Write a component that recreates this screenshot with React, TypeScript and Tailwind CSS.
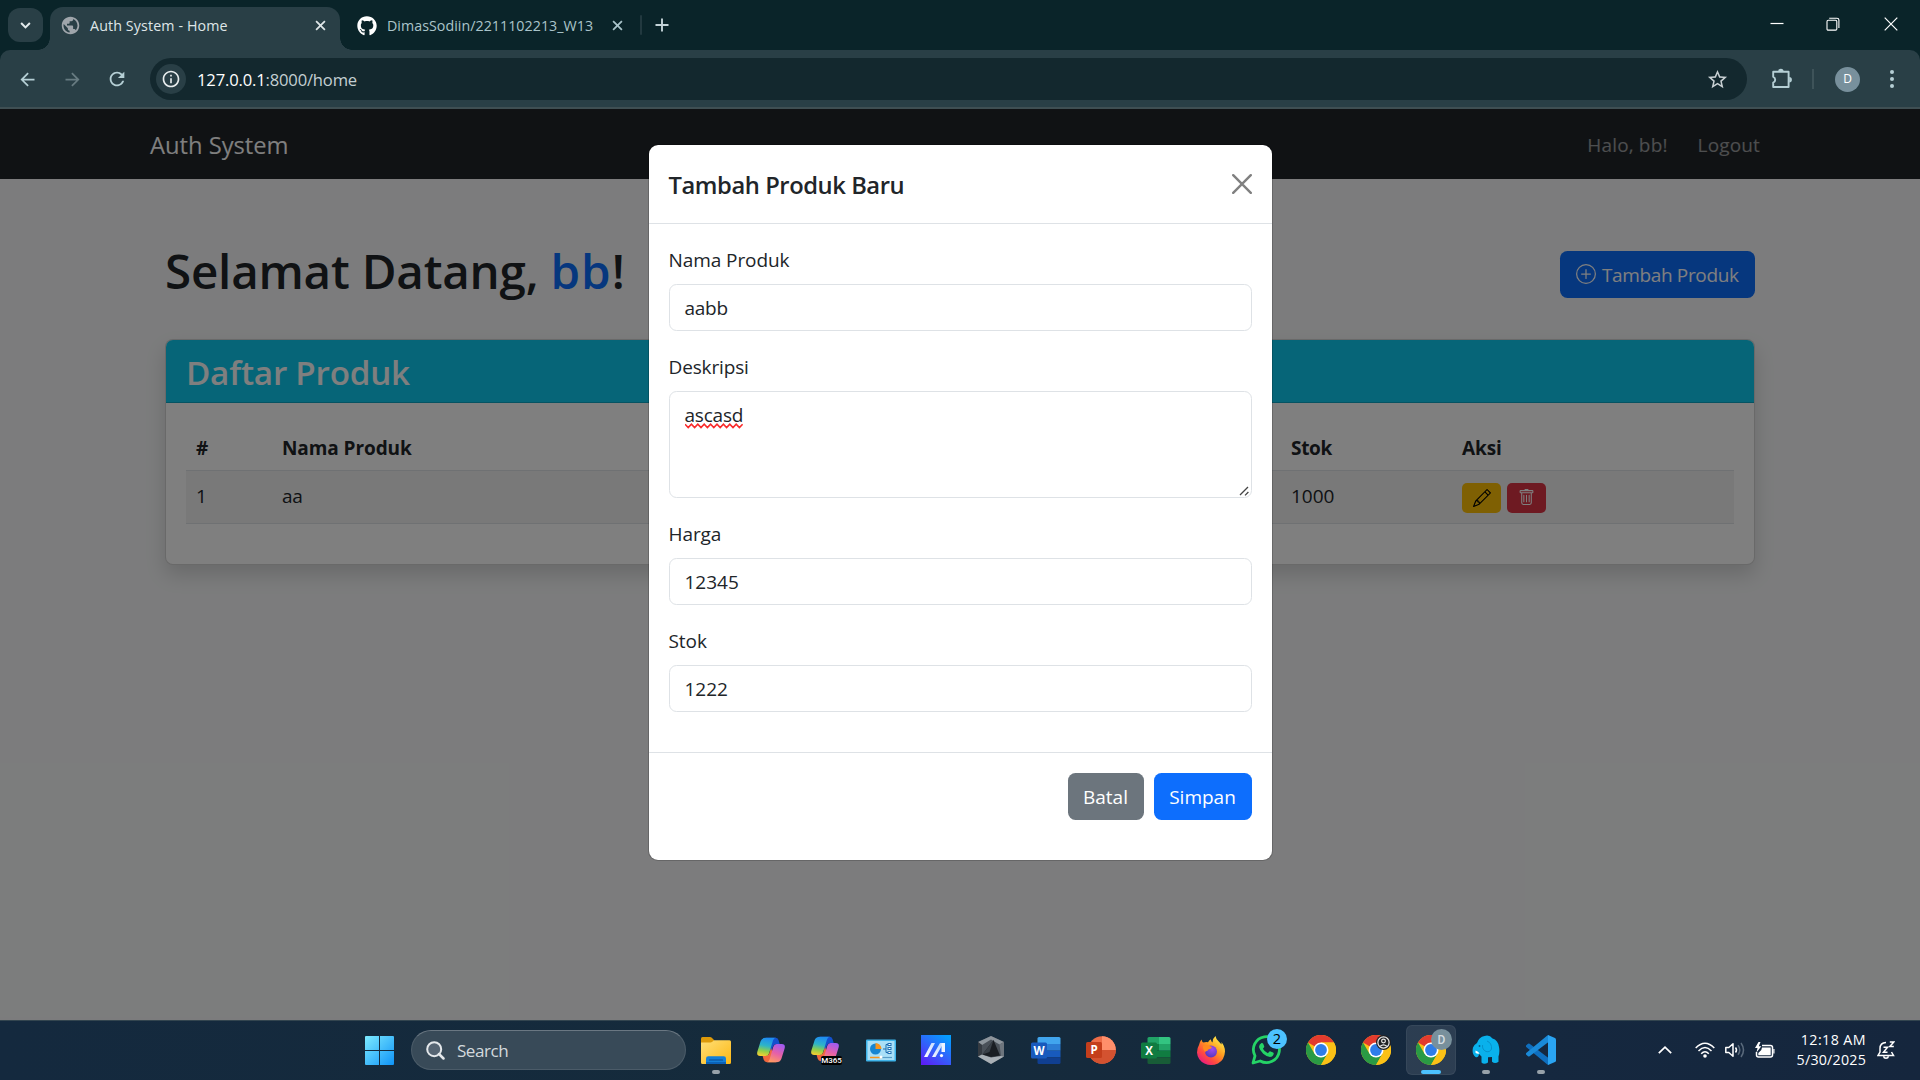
import type { ReactNode } from "react";
import { BsPencil, BsPlusCircle, BsTrash } from "react-icons/bs";
import { MdArrowBack, MdArrowForward, MdInfoOutline, MdPublic, MdRefresh, MdStarBorder } from "react-icons/md";
import { FaGithub } from "react-icons/fa";

function CloseGlyph({ className }: { className: string }) {
  return (
    <svg viewBox="0 0 12 12" className={className} stroke="currentColor" strokeWidth="1.9" fill="none">
      <path d="M1.2 1.2 10.8 10.8M10.8 1.2 1.2 10.8" />
    </svg>
  );
}

function TabStrip() {
  return (
    <div className="flex h-[50px] items-start bg-[#0a2429] text-[14.25px]">
      <div className="ml-2 mt-2 flex h-[34px] w-[35px] items-center justify-center rounded-[12px] bg-[#293f46]">
        <svg viewBox="0 0 12 8" className="h-[7px] w-[11px]" fill="none" stroke="#e3ebed" strokeWidth="2.3">
          <path d="M1 1.2 6 6.2 11 1.2" />
        </svg>
      </div>
      <div className="-ml-[5px] mt-[38px] h-3 w-3 bg-[radial-gradient(circle_at_0px_0px,transparent_11.5px,#293f46_12px)]" />
      <div className="mt-[7px] flex h-[43px] w-[290px] items-center rounded-t-[13px] bg-[#293f46] pl-[10px] pr-[14px] pb-[6px] text-[#dfe6e8]">
        <MdPublic className="size-[21px] text-[#9fa5ab]" />
        <span className="ml-[9px] flex-1 whitespace-nowrap leading-[22px] tracking-[0.12px]">Auth System - Home</span>
        <CloseGlyph className="size-[11px]" />
      </div>
      <div className="mt-[38px] h-3 w-3 bg-[radial-gradient(circle_at_12px_0px,transparent_11.5px,#293f46_12px)]" />
      <div className="mt-[7px] flex h-[37px] w-[278px] items-center pl-[5px] text-[#aac4ca]">
        <FaGithub className="size-[20px] text-white" />
        <span className="ml-[10px] whitespace-nowrap leading-[22px] tracking-[0.03px]">DimasSodiin/2211102213_W13</span>
        <CloseGlyph className="ml-[19px] size-[11px]" />
      </div>
      <div className="ml-[10px] mt-[15px] h-5 w-[2px] rounded bg-[#22393f]" />
      <svg viewBox="0 0 14 14" className="ml-[13px] mt-[18px] size-[14px]" stroke="#c3d3d7" strokeWidth="1.9">
        <path d="M7 0.5V13.5M0.5 7H13.5" />
      </svg>
      <div className="flex flex-1 justify-end">
        <svg viewBox="0 0 14 14" className="mt-[17px] size-[14px]" stroke="#fff" strokeWidth="1.2">
          <path d="M0.5 6.5H13.5" />
        </svg>
        <svg viewBox="0 0 14 14" className="ml-[42px] mt-[17px] size-[14px]" stroke="#fff" strokeWidth="1.1" fill="none">
          <rect x="1" y="3.3" width="9.8" height="9.8" rx="1.2" />
          <path d="M3.2 1.2H11q1.9 0 1.9 1.9V11" />
        </svg>
        <svg viewBox="0 0 14 14" className="ml-[44px] mr-[22px] mt-[17px] size-[14px]" stroke="#fff" strokeWidth="1.2">
          <path d="M0.7 0.7 13.3 13.3M13.3 0.7 0.7 13.3" />
        </svg>
      </div>
    </div>
  );
}

function AddressBar() {
  return (
    <div className="bg-[#0a2429]">
      <div className="flex h-[59px] items-start rounded-t-[10px] border-b-2 border-[#3f4f53] bg-[#293f46] pt-2">
        <div className="flex h-[42px] w-[150px] items-center pl-[17px]">
          <MdArrowBack className="size-[21px] text-[#b5cfd5]" />
          <MdArrowForward className="ml-[24px] size-[21px] text-[#677b81]" />
          <MdRefresh className="ml-[23px] size-[22px] text-[#b5cfd5]" />
        </div>
        <div className="flex h-[42px] w-[1597px] items-center rounded-full bg-[#13282e] pl-[6px] pr-[18px]">
          <div className="flex size-[30px] items-center justify-center rounded-full bg-[#293f46]">
            <MdInfoOutline className="size-[20px] text-[#e8edee]" />
          </div>
          <span className="ml-[11px] flex-1 pt-[2px] text-[16.6px] leading-[24px] tracking-[-0.17px] text-[#c3cfd2]">
            <span className="text-white">127.0.0.1</span>:8000/home
          </span>
          <MdStarBorder className="size-[23px] text-[#c8d0d3]" />
        </div>
        <div className="flex h-[42px] flex-1 items-center">
          <svg viewBox="0 0 22 22" className="ml-[24px] size-[22px]">
            <path
              d="M2.2 3.8h15.4v15.2H2.2v-4.4a3.1 3.1 0 0 0 0-5.8z"
              fill="none"
              stroke="#b5cfd5"
              strokeWidth="1.9"
              strokeLinejoin="round"
            />
            <path d="M7.2 3.4a2.7 2.7 0 0 1 5.4 0zM18.2 9a2.7 2.7 0 0 1 0 5.4z" fill="#b5cfd5" />
          </svg>
          <div className="ml-[19px] h-5 w-[2px] bg-[#3e5359]" />
          <div className="ml-[21px] flex size-[25px] items-center justify-center rounded-full bg-[#78909c] text-[12px] font-medium text-white">D</div>
          <div className="ml-[30px] flex w-1 flex-col gap-[3px]">
            <span className="size-1 rounded-full bg-[#b5cfd5]" />
            <span className="size-1 rounded-full bg-[#b5cfd5]" />
            <span className="size-1 rounded-full bg-[#b5cfd5]" />
          </div>
        </div>
      </div>
    </div>
  );
}

function HomePage() {
  return (
    <div className="h-[911px] bg-[#f8f9fa] text-[19px] text-[#212529]">
      <nav className="flex h-[70px] items-center bg-[#212529] pl-[150px] pr-[160px]">
        <span className="flex-1 text-[23.75px] leading-[34px] pt-[2px] tracking-[-0.03px] text-white">Auth System</span>
        <span className="pt-px leading-[30px] tracking-[0.15px] text-white/55">Halo, bb!</span>
        <span className="ml-[30px] pt-px leading-[30px] tracking-[0.15px] text-white/55">Logout</span>
      </nav>
      <main className="px-[165px] pt-[60px]">
        <div className="flex h-[70px] items-center justify-between">
          <h1 className="mb-[10px] h-[60px] text-[47.5px] font-semibold leading-[63px] tracking-[-0.2px]">
            Selamat Datang, <span className="tracking-[1px] text-[#0d6efd]">bb</span>!
          </h1>
          <button className="flex h-[47px] w-[195px] items-center rounded-[7.5px] bg-[#0d6efd] pl-4 text-white">
            <BsPlusCircle className="size-[20px]" />
            <span className="ml-[6px] whitespace-nowrap pt-[2px] tracking-[-0.36px]">Tambah Produk</span>
          </button>
        </div>
        <section className="mt-[30px] flex h-[226px] flex-col overflow-hidden rounded-[8px] border border-black/[0.175] bg-white bg-clip-border shadow-[0_10px_20px_rgba(0,0,0,0.15)]">
          <h3 className="h-[63px] shrink-0 border-b border-black/[0.175] bg-[#0dcaf0] pl-[20px] pt-[10px] text-[33.25px] font-semibold leading-[45px] tracking-[-0.25px] text-white">
            Daftar Produk
          </h3>
          <div className="px-[20px] pt-[18px]">
            <div className="grid h-[50px] grid-cols-[86px_1009px_171px_1fr] border-b border-[#dee2e6] pt-[10px] font-bold leading-[34px]">
              <span className="pl-[10px]">#</span>
              <span className="pl-[10px] tracking-[-0.08px]">Nama Produk</span>
              <span className="pl-[10px] tracking-[-0.33px]">Stok</span>
              <span className="pl-[10px] tracking-[-0.11px]">Aksi</span>
            </div>
            <div className="grid h-[53px] grid-cols-[86px_1009px_171px_1fr] border-b border-[#dee2e6] bg-[#f2f2f2] pt-[10px] leading-[30px]">
              <span className="pl-[10px]">1</span>
              <span className="pl-[10px] tracking-[-0.3px]">aa</span>
              <span className="pl-[10px]">1000</span>
              <span className="flex gap-[6px] pl-[10px] pt-[2px]">
                <button className="flex h-[30px] w-[39px] items-center justify-center rounded-[5px] bg-[#ffc107] text-black">
                  <BsPencil className="size-[18px]" />
                </button>
                <button className="flex h-[30px] w-[39px] items-center justify-center rounded-[5px] bg-[#dc3545] pb-[2px] text-white">
                  <BsTrash className="size-[17px]" />
                </button>
              </span>
            </div>
          </div>
        </section>
      </main>
    </div>
  );
}

function Field({ label, value, spacing }: { label: string; value: string; spacing: string }) {
  return (
    <div className="mb-[20px]">
      <div className="mb-[10px] h-[30px] leading-[32px] tracking-[-0.08px]">{label}</div>
      <div className={`h-[47px] rounded-[7.5px] border border-[#dee2e6] pl-[15px] leading-[47px] ${spacing}`}>{value}</div>
    </div>
  );
}

function ProductModal() {
  return (
    <div className="h-[717px] w-[625px] rounded-[10px] border border-black/[0.175] bg-white bg-clip-padding text-[19px] text-[#212529]">
      <header className="flex h-[79px] items-center justify-between border-b border-[#dee2e6] pl-[20px] pr-[20px]">
        <h5 className="pt-[2px] text-[23.75px] font-semibold leading-[36px] tracking-[-0.43px]">Tambah Produk Baru</h5>
        <svg viewBox="0 0 20 20" className="size-[20px]" stroke="#808080" strokeWidth="2.4" strokeLinecap="round">
          <path d="M1.2 1.2 18.8 18.8M18.8 1.2 1.2 18.8" />
        </svg>
      </header>
      <div className="h-[529px] border-b border-[#dee2e6] p-[20px]">
        <Field label="Nama Produk" value="aabb" spacing="tracking-[-0.25px]" />
        <div className="mb-[20px]">
          <div className="mb-[10px] h-[30px] leading-[32px] tracking-[-0.14px]">Deskripsi</div>
          <div className="relative h-[107px] rounded-[7.5px] border border-[#dee2e6] pl-[15px] pt-[7px] leading-[33px] tracking-[-0.2px]">
            ascasd
            <svg viewBox="0 0 59 6" className="absolute left-[15px] top-[31px] h-[6px] w-[59px]" fill="none" stroke="#f92b2b" strokeWidth="1.6">
              <path d="M0 1.2 3.2 4.6 6.4 1.2 9.6 4.6 12.8 1.2 16 4.6 19.2 1.2 22.4 4.6 25.6 1.2 28.8 4.6 32 1.2 35.2 4.6 38.4 1.2 41.6 4.6 44.8 1.2 48 4.6 51.2 1.2 54.4 4.6 57.6 1.2" />
            </svg>
            <svg viewBox="0 0 10 10" className="absolute bottom-[1px] right-[2px] size-[10px]" stroke="#444" strokeWidth="1.3">
              <path d="M1 9 9 1M6 9.4 9.4 6" />
            </svg>
          </div>
        </div>
        <Field label="Harga" value="12345" spacing="tracking-normal" />
        <Field label="Stok" value="1222" spacing="tracking-normal" />
      </div>
      <footer className="flex justify-end gap-[10px] pr-[20px] pt-[20px] text-white">
        <button className="h-[47px] w-[76px] rounded-[7.5px] bg-[#6c757d] pt-[2px] font-medium">Batal</button>
        <button className="h-[47px] w-[98px] rounded-[7.5px] bg-[#0d6efd] pt-[2px] font-medium">Simpan</button>
      </footer>
    </div>
  );
}

/* Taskbar icons */

function Explorer() {
  return (
    <svg viewBox="0 0 30 27" className="h-[27px] w-[30px]">
      <defs>
        <linearGradient id="fold" x1="0" y1="0" x2="1" y2="1">
          <stop offset="0" stopColor="#ffdf78" />
          <stop offset="1" stopColor="#fdb813" />
        </linearGradient>
      </defs>
      <path d="M0 1.5Q0 0 1.5 0H9q1 0 1.8.8L13 3v5H0z" fill="#dd9a0a" />
      <path d="M0 5.5H9.5q1 0 1.8-.8L13 3.3h15.5q1.5 0 1.5 1.5v20.7q0 1.5-1.5 1.5H1.5Q0 27 0 25.5z" fill="url(#fold)" />
      <path d="M5 27v-5.5q0-2.3 2.3-2.3h15.4q2.3 0 2.3 2.3V27z" fill="#1480d8" />
      <path d="M5 27v-2h20v2z" fill="#0b62b8" />
      <path d="M8.5 23h13" stroke="#0a4a92" strokeWidth="1.2" strokeLinecap="round" />
    </svg>
  );
}

function Copilot({ id }: { id: string }) {
  return (
    <svg viewBox="0 0 28 26" className="h-[26px] w-[28px]">
      <defs>
        <linearGradient id={id + "a"} x1="0.4" y1="0" x2="0.2" y2="1">
          <stop offset="0" stopColor="#1f8df0" />
          <stop offset="0.4" stopColor="#2db4c8" />
          <stop offset="0.7" stopColor="#8fcf4a" />
          <stop offset="1" stopColor="#ffcf2f" />
        </linearGradient>
        <linearGradient id={id + "b"} x1="0.7" y1="0" x2="0.3" y2="1">
          <stop offset="0" stopColor="#a25bf0" />
          <stop offset="0.5" stopColor="#e660a8" />
          <stop offset="1" stopColor="#ff9a62" />
        </linearGradient>
      </defs>
      <path d="M9 .8h9.5q2.3 0 3 2.2l1.3 4.2h-3.600q-2.400 0-3.200 2.400L14 15z" fill="#1450cf" />
      <path d="M19 25.200H10q-2.600 0-3.300-2.400L5.500 18.500h4q2 0 2.700-2L14 11z" fill="#f2673e" />
      <path d="M8.800.8H19q-2.200.2-3 2.800L12 16.500q-.9 2.600-3.500 2.600H3.200Q-.8 19 .4 14.500L3.600 4.300Q4.800.8 8.800.8z" fill={`url(#${id}a)`} />
      <path d="M19.200 25.200H9.500q2.200-.2 3-2.800l3.800-12.700q.8-2.600 3.400-2.600h5.100q4 0 2.800 4.500l-3.200 10.100q-1.200 3.500-5.200 3.500z" fill={`url(#${id}b)`} />
    </svg>
  );
}

function CopilotM365() {
  return (
    <div className="relative h-[28px] w-[30px]">
      <Copilot id="m365" />
      <span className="absolute -bottom-px -right-px flex h-[9px] w-[21px] items-center justify-center rounded-[2px] bg-black font-['Roboto'] text-[8px] font-medium leading-none text-white">
        M365
      </span>
    </div>
  );
}

function ControlPanel() {
  return (
    <svg viewBox="0 0 30 22" className="h-[23px] w-[30px]">
      <rect width="30" height="22" rx="1" fill="#3fb4ea" />
      <rect x="1.5" y="1.5" width="27" height="19" fill="#a9dff7" />
      <circle cx="9.5" cy="9.5" r="5.5" fill="#1685d2" />
      <path d="M9.5 9.5V3.5a6 6 0 0 1 6 6z" fill="#f7941d" />
      <path d="M17 9.5h3V5h2M20 9.5V13h2" stroke="#1c6cae" fill="none" />
      <path d="M21.5 3.5h4v3h-4zM21.5 7.5h4v3h-4zM21.5 11.7h4v2.8h-4z" fill="#1d6fb5" />
      <path d="M22.5 4.5h2v1h-2zM22.5 8.5h2v1h-2zM22.5 12.6h2v1h-2z" fill="#fff" />
      <path d="M4 18h12" stroke="#f7941d" strokeWidth="1.5" />
      <path d="M16 18h10" stroke="#5a9ec8" strokeWidth="1.2" />
      <circle cx="15" cy="17.5" r="1.5" fill="#fff" />
    </svg>
  );
}

function MyAsus() {
  return (
    <svg viewBox="0 0 30 30" className="size-[30px]">
      <defs>
        <linearGradient id="asus" x1="0.8" y1="0" x2="0.1" y2="1">
          <stop offset="0" stopColor="#059dff" />
          <stop offset="0.6" stopColor="#3a55fa" />
          <stop offset="1" stopColor="#5d1cf5" />
        </linearGradient>
        <linearGradient id="asusw" x1="0" y1="1" x2="1" y2="0">
          <stop offset="0" stopColor="#fff" />
          <stop offset="1" stopColor="#b9d2ff" />
        </linearGradient>
      </defs>
      <rect width="30" height="30" fill="url(#asus)" />
      <path d="M3 22 10.5 8H14L6.500 22zM11 22 19 8h3.500L14.500 22z" fill="url(#asusw)" />
      <path d="M20.500 8H24v9h-3.500z" fill="#eef4ff" />
      <circle cx="20.500" cy="20.600" r="1.600" fill="#fff" />
    </svg>
  );
}

function HexShield() {
  return (
    <svg viewBox="0 0 26 28" className="h-[28px] w-[26px]">
      <path d="M13 0 26 6v14.500L13 28 0 20.500V6z" fill="#4a5159" />
      <path d="M13 0 26 6 21.500 8.500 13 3.500 4 9 0 6z" fill="#8d959c" />
      <path d="M0 6l4 3v10l-4 1.500z" fill="#353b42" />
      <path d="M26 6l-4.500 2.500L23 20l3 .5z" fill="#6d757d" />
      <path d="M13 28 0 20.500 4 18.500l9 3L23 20l3 .5z" fill="#a9b0b6" />
      <path d="M15.500 4 4.500 18.500 13 21l9-1.500z" fill="#1a1e23" />
      <path d="M15.500 4 4.500 18.500l7-2.500z" fill="#3a4148" />
    </svg>
  );
}

function Word() {
  return (
    <svg viewBox="0 0 30 27" className="h-[27px] w-[30px]">
      <path d="M8 0h20q1.500 0 1.500 1.500V7H6.500V1.500Q6.500 0 8 0z" fill="#41a5ee" />
      <path d="M6.500 7h23v6.700h-23z" fill="#2b7cd3" />
      <path d="M6.500 13.700h23v6.700h-23z" fill="#185abd" />
      <path d="M6.500 20.400h23v5.100q0 1.500-1.500 1.500H8q-1.500 0-1.500-1.500z" fill="#103f91" />
      <rect y="5.500" width="16" height="16" rx="1.500" fill="#185abd" />
      <text x="8" y="17.700" textAnchor="middle" fontSize="11.500" fontWeight="700" fill="#fff">W</text>
    </svg>
  );
}

function PowerPoint() {
  return (
    <svg viewBox="0 0 30 28" className="h-[28px] w-[30px]">
      <circle cx="16" cy="14" r="13.800" fill="#ed6c47" />
      <path d="M16 .2A13.800 13.800 0 0 1 29.800 14H16z" fill="#ff8f6b" />
      <path d="M29.800 14A13.800 13.800 0 0 1 2.200 14z" fill="#d35230" />
      <rect y="6" width="16" height="16" rx="1.500" fill="#c43e1c" />
      <text x="8" y="18.200" textAnchor="middle" fontSize="11.500" fontWeight="700" fill="#fff">P</text>
    </svg>
  );
}

function Excel() {
  return (
    <svg viewBox="0 0 30 27" className="h-[27px] w-[30px]">
      <path d="M8 0h10v7H6.500V1.500Q6.500 0 8 0z" fill="#21a366" />
      <path d="M18 0h10q1.500 0 1.500 1.500V7H18z" fill="#33c481" />
      <path d="M6.500 7H18v6.700H6.500z" fill="#107c41" />
      <path d="M18 7h11.500v6.700H18z" fill="#21a366" />
      <path d="M6.500 13.700H29.500v6.700h-23z" fill="#107c41" />
      <path d="M6.500 20.400h23v5.100q0 1.500-1.500 1.500H8q-1.500 0-1.500-1.500z" fill="#185c37" />
      <rect y="5.500" width="16" height="16" rx="1.500" fill="#107c41" />
      <text x="8" y="17.700" textAnchor="middle" fontSize="11.500" fontWeight="700" fill="#fff">X</text>
    </svg>
  );
}

function Firefox() {
  return (
    <svg viewBox="0 0 28 29" className="h-[29px] w-[28px]">
      <defs>
        <linearGradient id="ffx" x1="0.9" y1="0.1" x2="0.2" y2="1">
          <stop offset="0" stopColor="#fff04d" />
          <stop offset="0.4" stopColor="#ff9a1f" />
          <stop offset="0.7" stopColor="#ff4a40" />
          <stop offset="1" stopColor="#e5158a" />
        </linearGradient>
        <radialGradient id="ffp" cx="0.6" cy="0.3" r="0.8">
          <stop offset="0" stopColor="#a04cf0" />
          <stop offset="1" stopColor="#4a35b8" />
        </radialGradient>
      </defs>
      <path d="M2 9q.5-3 2.500-5.500Q5 6 6.500 6.500 9 5.500 11 6.200q1-2 3-3-.3 2 1.500 3.300Q15.800 2 18.500 0q.5 3.500 3.500 5.800Q24 8 24.500 8.500q.2-1.500-.2-2.500Q28 10 28 15.500 27.500 24 21 27.500 14 30.500 7.500 27.500.5 24 0 16.500 0 12 2 9z" fill="url(#ffx)" />
      <circle cx="14" cy="15.500" r="6" fill="url(#ffp)" />
      <path d="M6 10q4-2 6.500 0l2.500 1q-.5 1.800-3 2.200-1.500.3-1.500 1.800-1.500-.5-2 1Q5.500 13.500 6 10z" fill="#ff8a1e" />
    </svg>
  );
}

function WhatsApp() {
  return (
    <div className="relative size-[30px]">
      <svg viewBox="0 0 30 30" className="size-[30px]">
        <path d="M2 28 4 20.800A13 13 0 1 1 9.200 26z" fill="none" stroke="#25d366" strokeWidth="2.800" strokeLinejoin="round" />
        <path d="M10.500 8q1.200-.3 1.700.8l1 2.400q.2.700-.3 1.300l-1 1.200q1.800 3.200 5 4.600l1.500-1.700q.5-.5 1.200-.2l2.500 1.200q.7.400.6 1.100-.5 3-3.800 3.200-3 0-6.700-3.200Q8.500 15 8 12q0-2.700 2.500-4z" fill="#25d366" />
      </svg>
      <span className="absolute -right-[6px] -top-[6px] flex size-[20px] items-center justify-center rounded-full bg-[#4cc2ff] text-[14.5px] leading-none text-black">2</span>
    </div>
  );
}

function Chrome() {
  return (
    <svg viewBox="0 0 30 30" className="size-[30px]">
      <circle cx="15" cy="15" r="15" fill="#fbc116" />
      <path d="M15 15 2 7.500A15 15 0 0 1 28 7.500H15z" fill="#e33b2e" />
      <path d="M2 7.500A15 15 0 0 0 15 30l6.500-11.200L15 15 8.500 18.800z" fill="#2a9a44" />
      <path d="M28 7.500H15L21.500 18.800 15 30A15 15 0 0 0 28 7.500z" fill="#fbc116" />
      <circle cx="15" cy="15" r="7.500" fill="#fff" />
      <circle cx="15" cy="15" r="5.900" fill="#2f7de9" />
    </svg>
  );
}

function ChromeGuest() {
  return (
    <div className="relative size-[30px]">
      <Chrome />
      <svg viewBox="0 0 16 16" className="absolute right-0 top-0 size-[15px]">
        <circle cx="8" cy="8" r="8" fill="#202124" />
        <circle cx="8" cy="8" r="6" fill="none" stroke="#e8e8e8" strokeWidth="1.300" />
        <circle cx="8" cy="6.500" r="2" fill="none" stroke="#e8e8e8" strokeWidth="1.300" />
        <path d="M4.500 12q3.500-3 7 0" stroke="#e8e8e8" strokeWidth="1.300" fill="none" />
      </svg>
    </div>
  );
}

function ChromeProfile() {
  return (
    <div className="relative size-[30px]">
      <Chrome />
      <span className="absolute -right-[6px] -top-[6px] flex size-[21px] items-center justify-center rounded-full bg-[#78909c] font-['Roboto'] text-[12px] font-medium leading-none text-[#d5dde1]">
        D
      </span>
    </div>
  );
}

function Elephant() {
  return (
    <svg viewBox="0 0 28 30" className="h-[30px] w-[28px]">
      <path d="M5 8Q7 2 12.500 1q5-1.500 8 2.500Q26 5 27 12q1 5-.5 9.500v5.200q-3.500 2.600-6.500 0V22l-4 .3v5.200q-4 2.500-6.500 0v-6L7 19q-.5 4-3.500 3Q-.5 19 1 12.500 2 9.500 5 8z" fill="#09b1ec" />
      <path d="M15 6q5 2 4.500 8-1.500 3.500-5.500 2.500-4-2-3.500-6.500" stroke="#0791cb" strokeWidth="1" fill="none" />
      <path d="M3.500 15.500q3 .8 4 3-2.500.5-4-.7z" fill="#fff" />
      <circle cx="7.500" cy="11" r=".9" fill="#075f8b" />
    </svg>
  );
}

function VSCode() {
  return (
    <svg viewBox="0 0 30 30" className="size-[30px]">
      <path d="M0 10.500 2 8.700q.8-.6 1.600 0L22.500 23v7q-.8 0-1.500-.7L.2 12q-.6-.8-.2-1.500z" fill="#0f6fbf" />
      <path d="M0 19.500 2 21.300q.8.600 1.600 0L22.500 7V0q-.8 0-1.500.7L.2 18q-.6.800-.2 1.500z" fill="#1a8ad8" />
      <path d="M22 0l7 3q1 .5 1 1.600v20.800q0 1.100-1 1.600l-7 3z" fill="#2aa4f2" />
    </svg>
  );
}

function TaskItem({ children, mark = "" }: { children: ReactNode; mark?: "" | "open" | "active" }) {
  return (
    <div className="flex h-full w-[55px] items-center justify-center">
      <div
        className={
          mark === "active"
            ? "relative flex size-[50px] items-center justify-center rounded-[6px] border border-white/5 bg-white/10"
            : "relative flex size-[50px] items-center justify-center"
        }
      >
        {children}
        {mark === "open" && <span className="absolute bottom-px left-[21px] h-1 w-2 rounded-full bg-[#97a1a9]" />}
        {mark === "active" && <span className="absolute bottom-0 left-[14px] h-1 w-5 rounded-full bg-[#4cc2ff]" />}
      </div>
    </div>
  );
}

function SystemTray() {
  return (
    <div className="flex flex-1 items-center justify-end pr-[25px] text-white">
      <svg viewBox="0 0 14 8" className="h-[8px] w-[14px]" fill="none" stroke="#fff" strokeWidth="1.7">
        <path d="M.8 7.200 7 1.200l6.200 6" />
      </svg>
      <svg viewBox="0 0 20 16" className="ml-[23px] h-[16px] w-[20px]" fill="none" stroke="#fff" strokeWidth="1.5">
        <path d="M.7 6q9.300-9.600 18.600 0M3.500 9q6.500-6.800 13 0M6.200 11.800q3.800-4 7.600 0" />
        <circle cx="10" cy="14" r="1.800" fill="#fff" stroke="none" />
      </svg>
      <svg viewBox="0 0 20 16" className="ml-[10px] h-[16px] w-[20px]" fill="none" stroke="#fff" strokeWidth="1.5" strokeLinejoin="round">
        <path d="M.8 5.500h3L8 1.800v12.400L3.800 10.500h-3z" />
        <path d="M10.500 5.500q2 2.500 0 5" />
        <path d="M13 3.200q3.600 4.800 0 9.600M16 1q5 7 0 14" stroke="#5a6a7c" />
      </svg>
      <svg viewBox="0 0 20 17" className="ml-[10px] h-[17px] w-[20px]">
        <path d="M7 3.500h8.500q2 0 2 2v7.500q0 2-2 2h-12q-2 0-2-2V10" fill="none" stroke="#fff" strokeWidth="1.500" />
        <path d="M7 5.500h8.700v7.700H3.300V11l3-3z" fill="#fff" />
        <path d="M18.300 7h1.200v4.500h-1.200z" fill="#fff" />
        <path d="M3.500 0 0 6h2.500L1.500 10.500 6.300 4.200H3.800L5.500 0z" fill="#fff" />
      </svg>
      <div className="ml-[21px] w-[70px] text-right text-[14.25px] leading-[20px]">
        <div className="tracking-[0.42px]">12:18 AM</div>
        <div className="tracking-[0.21px]">5/30/2025</div>
      </div>
      <svg viewBox="0 0 18 18" className="ml-[11px] h-[18px] w-[18px]" fill="none" stroke="#fff" strokeWidth="1.5">
        <path d="M9 1.500q-6 .2-6 6V11l-2 3.500h15.500l-2-3.500" />
        <path d="M6.500 15.200q.5 2 2.500 2t2.500-2" />
        <path d="M6.500 6.200h4l-4 5h4M12.800 1h4l-4 4.500h4" />
      </svg>
    </div>
  );
}

function Taskbar() {
  return (
    <div className="flex h-[60px] items-center border-t border-[#33454f] bg-[linear-gradient(90deg,#14293e,#152b3b_45%,#15283f_80%,#15263d)] pb-px">
      <svg viewBox="0 0 29 29" className="ml-[365px] size-[29px]">
        <defs>
          <linearGradient id="win" x1="0" y1="0" x2="1" y2="1">
            <stop offset="0" stopColor="#7deaff" />
            <stop offset="1" stopColor="#0f93f7" />
          </linearGradient>
        </defs>
        <path d="M0 1Q0 0 1 0h13v14H0zM15 0h13q1 0 1 1v13H15zM0 15h14v14H1q-1 0-1-1zM15 15h14v13q0 1-1 1H15z" fill="url(#win)" />
      </svg>
      <div className="ml-[17px] flex h-[40px] w-[275px] items-center rounded-full border border-white/10 border-t-white/25 bg-[#384a58] pl-[14px]">
        <svg viewBox="0 0 19 19" className="size-[19px]" fill="none" stroke="#e4e8eb" strokeWidth="2">
          <circle cx="8.200" cy="8.200" r="7" fill="#566573" />
          <path d="M13 13 17.500 17.500" strokeWidth="2.500" strokeLinecap="round" />
        </svg>
        <span className="ml-[12px] pt-px text-[17.1px] tracking-[-0.5px] text-[#d3d9dd]">Search</span>
      </div>
      <div className="ml-[2.5px] flex h-full">
        <TaskItem mark="open"><Explorer /></TaskItem>
        <TaskItem><Copilot id="cp" /></TaskItem>
        <TaskItem><CopilotM365 /></TaskItem>
        <TaskItem><ControlPanel /></TaskItem>
        <TaskItem><MyAsus /></TaskItem>
        <TaskItem><HexShield /></TaskItem>
        <TaskItem><Word /></TaskItem>
        <TaskItem><PowerPoint /></TaskItem>
        <TaskItem><Excel /></TaskItem>
        <TaskItem><Firefox /></TaskItem>
        <TaskItem><WhatsApp /></TaskItem>
        <TaskItem><Chrome /></TaskItem>
        <TaskItem><ChromeGuest /></TaskItem>
        <TaskItem mark="active"><ChromeProfile /></TaskItem>
        <TaskItem mark="open"><Elephant /></TaskItem>
        <TaskItem mark="open"><VSCode /></TaskItem>
      </div>
      <SystemTray />
    </div>
  );
}

export default function App() {
  return (
    <div className="h-[1080px] w-[1920px] overflow-hidden font-['Open_Sans','Noto_Sans',sans-serif]">
      <TabStrip />
      <AddressBar />
      <div className="relative h-[911px]">
        <HomePage />
        <div className="absolute inset-0 flex items-start justify-center bg-black/50 pt-[35px]">
          <ProductModal />
        </div>
      </div>
      <Taskbar />
    </div>
  );
}
